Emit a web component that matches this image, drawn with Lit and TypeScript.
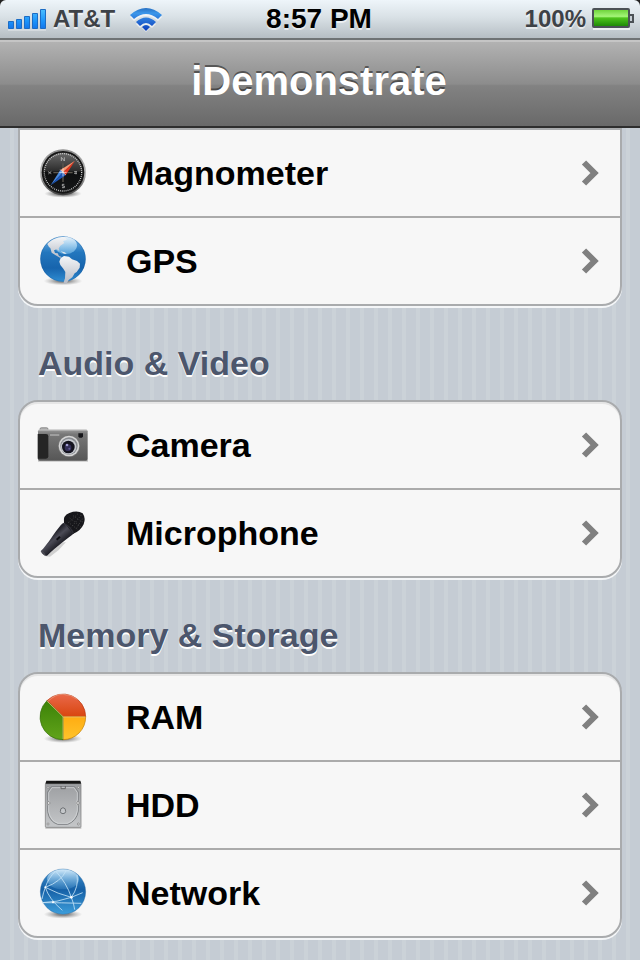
import { LitElement, html, css, svg } from "lit";
import { customElement } from "lit/decorators.js";

type IconName = "compass" | "globe" | "camera" | "mic" | "pie" | "disk" | "network";

interface Group {
  title?: string;
  rows: { label: string; icon: IconName }[];
}

const GROUPS: Group[] = [
  {
    rows: [
      { label: "Magnometer", icon: "compass" },
      { label: "GPS", icon: "globe" },
    ],
  },
  {
    title: "Audio & Video",
    rows: [
      { label: "Camera", icon: "camera" },
      { label: "Microphone", icon: "mic" },
    ],
  },
  {
    title: "Memory & Storage",
    rows: [
      { label: "RAM", icon: "pie" },
      { label: "HDD", icon: "disk" },
      { label: "Network", icon: "network" },
    ],
  },
];

const shadow = (cy: number, rx = 58) => svg`
  <defs><radialGradient id="shade"><stop offset="0.3" stop-color="#444" stop-opacity=".6"/><stop offset="1" stop-color="#777" stop-opacity="0"/></radialGradient></defs>
  <ellipse cx="99" cy=${cy} rx=${rx} ry="13" fill="url(#shade)"/>`;

const ICONS = {
  compass: {
    box: "105 75 168 168",
    art: svg`
      <defs>
        <linearGradient id="ring" x2="0" y2="1"><stop offset="0" stop-color="#8c8c8c"/><stop offset=".5" stop-color="#b8b8b8"/><stop offset="1" stop-color="#3c3c3c"/></linearGradient>
        <linearGradient id="dial" x2="0" y2="1"><stop offset="0" stop-color="#6a6a6a"/><stop offset=".46" stop-color="#2d2d2d"/><stop offset=".5" stop-color="#0e0f10"/><stop offset="1" stop-color="#151617"/></linearGradient>
        <radialGradient id="under"><stop offset=".4" stop-color="#555" stop-opacity=".7"/><stop offset="1" stop-color="#777" stop-opacity="0"/></radialGradient>
      </defs>
      <ellipse cx="189" cy="221" rx="56" ry="12" fill="url(#under)"/>
      <circle cx="189" cy="157" r="69" fill="url(#ring)"/>
      <circle cx="189" cy="157" r="64" fill="#161616"/>
      <circle cx="189" cy="157" r="59" fill="url(#dial)"/>
      <circle cx="189" cy="157" r="56" fill="none" stroke="#d8d8d8" stroke-width="4" stroke-dasharray="2.5 3.4"/>
      <path d="M189 130v56M160 158h58" stroke="#5c574f" stroke-width="4"/>
      <path d="M184 123v-11l9 11v-11M193 193h-6v5h6v5h-7" fill="none" stroke="#bbb" stroke-width="2.5"/>
      <path d="M144 155l10 6M145 162l9-8M222 155h9M222 160h9M228 153v10" stroke="#aaa" stroke-width="2.5"/>
      <path d="M225 122L197 166 189 157z" fill="#e2331c"/><path d="M225 122L181 150 189 157z" fill="#f99873"/>
      <path d="M152 196L181 150 189 157z" fill="#4b8be0"/><path d="M152 196L197 166 189 157z" fill="#1d56b8"/>
      <path d="M189 145v24M178 157h22M181 149l16 16" stroke="#fff" stroke-width="2"/>`,
  },
  globe: {
    box: "15 24 168 168",
    art: svg`
      ${shadow(168)}
      <defs>
        <linearGradient id="sea" x2="0" y2="1"><stop offset="0" stop-color="#77b5e6"/><stop offset=".35" stop-color="#2377be"/><stop offset=".7" stop-color="#1764ad"/><stop offset="1" stop-color="#2f8dd2"/></linearGradient>
        <linearGradient id="sheen" x2="0" y2="1"><stop offset="0" stop-color="#fff" stop-opacity=".85"/><stop offset="1" stop-color="#8fd0f7" stop-opacity=".5"/></linearGradient>
        <linearGradient id="land" x2="0" y2="1"><stop offset="0" stop-color="#f4f6f8"/><stop offset="1" stop-color="#b6bac4"/></linearGradient>
      </defs>
      <circle cx="99" cy="102" r="68" fill="url(#sea)"/>
      <circle cx="99" cy="102" r="67" fill="none" stroke="#1b5c9e" stroke-opacity=".5" stroke-width="2"/>
      <ellipse cx="107" cy="61" rx="34" ry="26" fill="url(#sheen)"/>
      <path d="M52 57C64 43 84 34 103 36l8 8-12 4 4 6-12 8-5 8 2 8-8-5-8 3 3 8 8 1 4 8 7 2-3 4-14-8-12-8-4-14-4-3z" fill="url(#land)"/>
      <path d="M92 79l12 3 6 4-8 0z" fill="#dfe8ef"/>
      <path d="M92 99l10-6 15 2 9 8 15 5 9 8-1 12-9 13-6 4-7 12-11 8-5 9-8 3-2-5 4-12 1-19-6-10-9-11-3-10z" fill="url(#land)"/>`,
  },
  camera: {
    box: "15 6 168 168",
    art: svg`
      <defs><linearGradient id="body" x2="0" y2="1"><stop offset="0" stop-color="#999"/><stop offset=".15" stop-color="#777"/><stop offset="1" stop-color="#565656"/></linearGradient></defs>
      <path d="M24 135h150v5H24z" fill="#999" opacity=".5"/>
      <rect x="30" y="38" width="24" height="10" rx="4" fill="#aaa" stroke="#777" stroke-width="2"/>
      <rect x="24" y="44" width="149" height="93" rx="5" fill="url(#body)"/>
      <path d="M26 45h145" stroke="#c8c8c8" stroke-width="3"/>
      <path d="M23 57h25q7 0 7 7v60q0 7-7 7H23z" fill="#252525"/>
      <path d="M60 60h28" stroke="#c7c7c7" stroke-width="3"/>
      <path d="M145 55h14v10q-7 7-14 0z" fill="#151519"/>
      <circle cx="117" cy="93" r="33" fill="#777"/>
      <circle cx="117" cy="93" r="31" fill="#d5d5d5"/>
      <circle cx="117" cy="93" r="26" fill="#888b90"/>
      <circle cx="116" cy="95" r="23" fill="#c5c8ce"/>
      <circle cx="115" cy="96" r="19" fill="#14131f"/>
      <circle cx="114" cy="98" r="10" fill="#343058"/>
      <circle cx="111" cy="90" r="4" fill="#9f9bd0"/><circle cx="118" cy="101" r="3" fill="#635b96"/>`,
  },
  mic: {
    box: "15 15 168 168",
    art: svg`
      <defs><linearGradient id="shaft" gradientUnits="userSpaceOnUse" x1="62" y1="108" x2="86" y2="136"><stop offset="0" stop-color="#25252d"/><stop offset=".4" stop-color="#4b4b56"/><stop offset="1" stop-color="#202028"/></linearGradient></defs>
      <path d="M46 169l14 1 26-20 22-24-12 2z" fill="#aaa" opacity=".5"/>
      <path d="M100 68L132 100C112 117 80 139 51 167Q40 169 32 154C56 130 73 98 92 76z" fill="url(#shaft)"/>
      <path d="M33 153q9 3 13 14" fill="none" stroke="#55555e" stroke-width="3"/>
      <path d="M80 119l10-9" stroke="#0b0b0f" stroke-width="6"/>
      <path d="M102 69Q98 46 118 39 142 30 158 40 168 55 161 73 151 94 130 101z" fill="#17171b"/>
      <path d="M102 71q19 8 28 29" fill="none" stroke="#303038" stroke-width="4"/>
      <path d="M119 54l35 27M129 47l32 21M114 66l31 24M154 45L123 83M144 41L117 67M158 56L137 88" stroke="#4c4c4c" stroke-width="2.5" stroke-dasharray="3 5"/>`,
  },
  pie: {
    box: "15 12 168 168",
    art: svg`
      ${shadow(161)}
      <defs>
        <linearGradient id="red" x2="0" y2="1"><stop offset="0" stop-color="#e9694a"/><stop offset="1" stop-color="#d9450f"/></linearGradient>
        <linearGradient id="green" x2="0" y2="1"><stop offset="0" stop-color="#3c8208"/><stop offset="1" stop-color="#61a41a"/></linearGradient>
        <linearGradient id="gold" x2="0" y2="1"><stop offset="0" stop-color="#ffac12"/><stop offset="1" stop-color="#ffc42b"/></linearGradient>
      </defs>
      <path d="M99 95L51 47A68 68 0 0 1 167 95z" fill="url(#red)" stroke="#b93a12" stroke-width="2"/>
      <path d="M99 95h68a68 68 0 0 1-68 69z" fill="url(#gold)" stroke="#c07d05" stroke-width="2"/>
      <path d="M99 95v69A68 68 0 0 1 51 47z" fill="url(#green)" stroke="#36700b" stroke-width="2"/>
      <path d="M53 50Q75 27 99 28 123 28 142 43" fill="none" stroke="#f0a78d" stroke-width="2"/>
      <path d="M52 49l47 46v67M99 96h67" fill="none" stroke="#f5cf8b" stroke-width="2"/>`,
  },
  disk: {
    box: "15 21 168 168",
    art: svg`
      <defs><linearGradient id="plate" x2="0" y2="1"><stop offset="0" stop-color="#9c9ea1"/><stop offset="1" stop-color="#c5c7c9"/></linearGradient></defs>
      <path d="M46 170h108v6H46z" fill="#888" opacity=".5"/>
      <rect x="46" y="41" width="107" height="131" rx="3" fill="url(#plate)" stroke="#777" stroke-width="2"/>
      <path d="M49 32h102l3 9H46z" fill="#151515"/>
      <path d="M64 50h70l11 16v25q-6 9 0 16v16q-5 30-32 40H83q-25-8-30-38v-18q6-8 0-16V66z" fill="none" stroke="#808386" stroke-width="3"/>
      <path d="M66 53h66l10 15v22q-6 9 0 17v15q-5 29-30 38H84q-23-8-28-36v-18q6-8 0-16V68z" fill="none" stroke="#dadcde" stroke-width="2"/>
      <path d="M93 48v8h13v-8" fill="none" stroke="#666" stroke-width="3"/>
      <path d="M99 113q9 1 8 12-1 6-8 6t-8-6q-1-11 8-12z" fill="#c4c7ca" stroke="#6f7275" stroke-width="3"/>
      <g fill="#eee" stroke="#777" stroke-width="2"><circle cx="54" cy="52" r="3"/><circle cx="145" cy="52" r="3"/><circle cx="56" cy="99" r="4"/><circle cx="144" cy="99" r="4"/><circle cx="54" cy="162" r="3"/><circle cx="145" cy="162" r="3"/></g>`,
  },
  network: {
    box: "15 15 168 168",
    art: svg`
      ${shadow(163)}
      <defs>
        <linearGradient id="orb" x2="0" y2="1"><stop offset="0" stop-color="#4394d0"/><stop offset=".45" stop-color="#1560a6"/><stop offset="1" stop-color="#3d9edb"/></linearGradient>
        <linearGradient id="gloss" x2="0" y2="1"><stop offset="0" stop-color="#e2f2fd" stop-opacity=".9"/><stop offset="1" stop-color="#6ab0e1" stop-opacity=".2"/></linearGradient>
      </defs>
      <circle cx="99" cy="95" r="68" fill="url(#orb)" stroke="#165591" stroke-width="1"/>
      <ellipse cx="99" cy="58" rx="48" ry="30" fill="url(#gloss)"/>
      <g fill="none" stroke="#c5e3f7" stroke-width="2.5">
        <path d="M77 33Q55 54 46 82 40 98 36 117"/><path d="M77 33Q110 69 124 112 132 132 134 149"/><path d="M46 82Q84 102 124 112L158 98"/><path d="M36 128Q82 127 124 112"/><path d="M141 45Q147 80 124 112"/><path d="M46 82Q93 65 109 31"/><path d="M46 82Q56 116 97 151"/><path d="M36 128Q95 128 154 130"/>
      </g>
      <g fill="#fff"><circle cx="124" cy="112" r="4"/><circle cx="46" cy="82" r="3"/><circle cx="69" cy="127" r="3"/></g>`,
  },
};

@customElement("menu-icon")
export class MenuIcon extends LitElement {
  static properties = { name: { type: String } };
  declare name: IconName;

  static styles = css`
    :host { display: block; flex: none; width: 56px; height: 56px; }
    .art { display: block; width: 100%; height: 100%; }
  `;

  render() {
    const icon = ICONS[this.name];
    return html`<svg class="art" viewBox=${icon.box} aria-hidden="true">${icon.art}</svg>`;
  }
}

@customElement("status-bar")
export class StatusBar extends LitElement {
  static styles = css`
    :host {
      display: grid;
      grid-template-columns: 1fr auto 1fr;
      align-items: center;
      box-sizing: border-box;
      height: 40px;
      padding: 0 6px 0 8px;
      background: linear-gradient(#eef5fa, #d9e1e6 45%, #b6bec4);
      border-bottom: 2px solid #6f7375;
      border-radius: 6px 6px 0 0;
      font-size: 24px;
      font-weight: bold;
      line-height: 38px;
      color: #3e4247;
      text-shadow: 0 2px 0 rgba(255, 255, 255, 0.6);
    }
    .side { display: flex; align-items: center; gap: 6px; }
    .end { justify-content: flex-end; }
    .clock { padding-right: 4px; font-size: 28px; color: #000; }
    .bars, .wifi, .battery { display: block; flex: none; }
    .wifi { margin-left: 8px; }
  `;

  render() {
    return html`
      <div class="side">
        <svg class="bars" width="39" height="24" viewBox="0 0 39 24" role="img" aria-label="Signal">
          <defs><linearGradient id="sig" gradientUnits="userSpaceOnUse" x1="0" y1="2" x2="0" y2="22"><stop offset="0" stop-color="#4cc0ff"/><stop offset=".6" stop-color="#1c94fa"/><stop offset="1" stop-color="#1273ea"/></linearGradient></defs>
          <path d="M0 22.500h38v1H0z" fill="#fff" opacity=".6"/>
          <g fill="url(#sig)" stroke="#1c6cc4" stroke-width="1">
            <path d="M.5 14.500h5v7h-5zM8.500 12.500h5v9h-5zM16.500 9.500h5v12h-5zM24.500 6.500h5v15h-5zM32.500 2.500h5v19h-5z"/>
          </g>
        </svg>
        <span>AT&amp;T</span>
        <svg class="wifi" width="34" height="26" viewBox="0 0 34 26" role="img" aria-label="Wi-Fi">
          <defs><linearGradient id="wf" gradientUnits="userSpaceOnUse" x1="0" y1="0" x2="0" y2="24"><stop offset="0" stop-color="#1e61b4"/><stop offset=".3" stop-color="#3c97ea"/><stop offset="1" stop-color="#0c3fbd"/></linearGradient></defs>
          <path d="M1 11Q17-3 33 11l-4 4Q17 5 5 15zM7 18Q17 9 27 18l-4 4Q17 16 11 22zM17 26l-4-4q4-3 8 0z" fill="#fff" opacity=".6"/>
          <path d="M1 9Q17-5 33 9l-4 4Q17 3 5 13zM7 16Q17 7 27 16l-4 4Q17 14 11 20zM17 25l-4-4q4-4 8 0z" fill="url(#wf)"/>
        </svg>
      </div>
      <time class="clock">8:57 PM</time>
      <div class="side end">
        <span>100%</span>
        <svg class="battery" width="42" height="22" viewBox="0 0 42 22" role="img" aria-label="Battery full">
          <defs><linearGradient id="bat" x2="0" y2="1"><stop offset="0" stop-color="#6fd43c"/><stop offset=".4" stop-color="#a4f578"/><stop offset=".5" stop-color="#4ec41c"/><stop offset="1" stop-color="#1f8a07"/></linearGradient></defs>
          <path d="M1 21h37" stroke="#fff" stroke-opacity=".7" stroke-width="2"/>
          <rect x="1" y="1" width="36" height="18" rx="1" fill="#8fbf80" stroke="#4b5156" stroke-width="2"/>
          <rect x="2" y="2" width="34" height="16" fill="url(#bat)"/>
          <path d="M38 7h3v7h-3" fill="#c5cdd3" stroke="#4b5156" stroke-width="2"/>
        </svg>
      </div>
    `;
  }
}

@customElement("app-root")
export class AppRoot extends LitElement {
  static styles = css`
    :host {
      display: block;
      min-height: 100vh;
      box-sizing: border-box;
      font-family: "Liberation Sans", Arial, Helvetica, sans-serif;
      background: repeating-linear-gradient(90deg, #c5ccd4 0 10px, #cbd2d8 10px 14px);
    }
    .top { background: #222; }
    .bar {
      display: flex;
      align-items: center;
      justify-content: center;
      box-sizing: border-box;
      height: 88px;
      padding: 0 2px 6px 0;
      background: linear-gradient(#b2b2b2, #8c8c8c 50%, #828282 52%, #696969);
      border-top: 2px solid #c5c5c5;
      border-bottom: 2px solid #2e2e2e;
    }
    .title {
      margin: 0;
      font-size: 40px;
      line-height: 48px;
      color: #fff;
      text-shadow: 0 -2px 0 rgba(0, 0, 0, 0.45);
    }
    .content { padding: 0 18px 22px; }
    .heading {
      margin: 0;
      padding: 37px 20px 17px;
      font-size: 34px;
      line-height: 40px;
      color: #4c566c;
      text-shadow: 0 2px 0 #fff;
    }
    .group {
      margin: 0;
      padding: 0;
      list-style: none;
      background: #f7f7f7;
      border: 2px solid #a9abad;
      border-radius: 20px;
      box-shadow: 0 2px 0 #f4f6f8, inset 0 2px 0 #e6e6e6;
      overflow: hidden;
    }
    .group.continued {
      border-radius: 0 0 20px 20px;
      box-shadow: 0 2px 0 #f4f6f8;
    }
    .item + .item { border-top: 2px solid #ababab; }
    .row {
      display: flex;
      align-items: center;
      height: 86px;
      padding: 0 20px 0 15px;
      color: #000;
      text-decoration: none;
    }
    .label {
      flex: 1;
      margin-left: 35px;
      font-size: 34px;
      font-weight: bold;
      line-height: 40px;
    }
    .chevron { display: block; flex: none; }
  `;

  render() {
    return html`
      <header class="top">
        <status-bar></status-bar>
        <div class="bar"><h1 class="title">iDemonstrate</h1></div>
      </header>
      <main class="content">
        ${GROUPS.map(
          (group) => html`
            <section>
              ${group.title ? html`<h2 class="heading">${group.title}</h2>` : ""}
              <ul class="group ${group.title ? "" : "continued"}">
                ${group.rows.map(
                  (row) => html`
                    <li class="item">
                      <a class="row" href="#${row.label.toLowerCase()}">
                        <menu-icon .name=${row.icon}></menu-icon>
                        <span class="label">${row.label}</span>
                        <svg class="chevron" width="20" height="28" viewBox="0 0 20 28" aria-hidden="true">
                          <path d="M4 3.500L14.500 14 4 24.500" fill="none" stroke="#808080" stroke-width="6"/>
                        </svg>
                      </a>
                    </li>
                  `,
                )}
              </ul>
            </section>
          `,
        )}
      </main>
    `;
  }
}
